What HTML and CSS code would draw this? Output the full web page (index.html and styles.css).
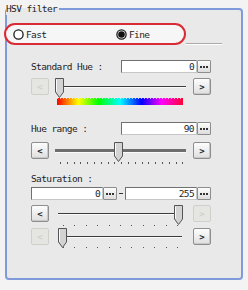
FILE: index.html
```html
<!DOCTYPE html>
<html lang="en">
<head>
    <meta charset="UTF-8">
    <meta name="viewport" content="width=device-width, initial-scale=1.0">
    <title>HSV filter</title>
    <link rel="stylesheet" href="styles.css">
</head>
<body>
    <fieldset class="panel">
        <legend class="panel-title">HSV filter</legend>

        <div class="mode-row">
            <div class="mode-box">
                <label class="radio radio-fast">
                    <svg width="11" height="11" viewBox="0 0 11 11"><circle cx="5.5" cy="5.5" r="4.6" fill="#fff" stroke="#1a1a1a" stroke-width="1.3"/></svg>
                    Fast
                </label>
                <label class="radio">
                    <svg width="11" height="11" viewBox="0 0 11 11"><circle cx="5.5" cy="5.5" r="4.6" fill="#fff" stroke="#1a1a1a" stroke-width="1.3"/><circle cx="5.5" cy="5.5" r="3.3" fill="#111"/></svg>
                    Fine
                </label>
            </div>
            <div class="mode-line"></div>
        </div>

        <div class="group">
            <!-- Standard Hue -->
            <div class="field-row first">
                <span class="field-label">Standard Hue :</span>
                <span class="num-box num-wide">0</span>
                <span class="dots-btn"><i></i><i></i><i></i></span>
            </div>
            <div class="slider">
                <span class="step-btn is-off">&lt;</span>
                <div class="slider-body">
                    <div class="track"></div>
                    <svg class="thumb" style="left: 6px" width="9" height="20" viewBox="0 0 9 20"><path d="M0.5 0.5H8.5V14L4.5 19.5L0.5 14Z" fill="#d3d3d3" stroke="#555"/><path d="M1.5 1.5V13.5" stroke="#fafafa"/></svg>
                </div>
                <span class="step-btn">&gt;</span>
            </div>
            <div class="hue-bar"></div>

            <!-- Hue range -->
            <div class="field-row spaced">
                <span class="field-label">Hue range :</span>
                <span class="num-box num-wide">90</span>
                <span class="dots-btn"><i></i><i></i><i></i></span>
            </div>
            <div class="slider slider-lift">
                <span class="step-btn">&lt;</span>
                <div class="slider-body">
                    <div class="track track-thick"></div>
                    <svg class="thumb" style="left: 65px" width="9" height="20" viewBox="0 0 9 20"><path d="M0.5 0.5H8.5V14L4.5 19.5L0.5 14Z" fill="#d3d3d3" stroke="#555"/><path d="M1.5 1.5V13.5" stroke="#fafafa"/></svg>
                </div>
                <span class="step-btn">&gt;</span>
            </div>
            <div class="ticks ticks-hue"></div>

            <!-- Saturation -->
            <div class="block-label">Saturation :</div>
            <div class="field-row pair">
                <span class="num-box num-half">0</span>
                <span class="dots-btn"><i></i><i></i><i></i></span>
                <span class="dash"></span>
                <span class="num-box num-half">255</span>
                <span class="dots-btn"><i></i><i></i><i></i></span>
            </div>
            <div class="slider">
                <span class="step-btn">&lt;</span>
                <div class="slider-body">
                    <div class="track track-sat"></div>
                    <svg class="thumb" style="left: 125px" width="9" height="20" viewBox="0 0 9 20"><path d="M0.5 0.5H8.5V14L4.5 19.5L0.5 14Z" fill="#d3d3d3" stroke="#555"/><path d="M1.5 1.5V13.5" stroke="#fafafa"/></svg>
                </div>
                <span class="step-btn is-off">&gt;</span>
            </div>
            <div class="ticks ticks-sat"></div>
            <div class="slider slider-tight">
                <span class="step-btn is-off">&lt;</span>
                <div class="slider-body">
                    <div class="track track-sat"></div>
                    <svg class="thumb" style="left: 9px" width="9" height="20" viewBox="0 0 9 20"><path d="M0.5 0.5H8.5V14L4.5 19.5L0.5 14Z" fill="#d3d3d3" stroke="#555"/><path d="M1.5 1.5V13.5" stroke="#fafafa"/></svg>
                </div>
                <span class="step-btn">&gt;</span>
            </div>
            <div class="ticks ticks-sat ticks-last"></div>
        </div>
    </fieldset>
</body>
</html>
```

FILE: styles.css
```css
body {
    margin: 0;
    padding: 3px 0 0 5px;
    background-color: #f3f3f3;
    font-family: "DejaVu Sans Mono", monospace;
    font-size: 9.5px;
    letter-spacing: -0.6px;
    color: #1e1e1e;
}

.panel {
    width: 238px;
    box-sizing: border-box;
    margin: 0;
    padding: 0 0 30px 0;
    border: 2px solid #7f9bdc;
    border-radius: 4px;
    background-color: #e9e9e9;
    min-inline-size: auto;
}

.panel-title {
    padding: 0 2px 0 0;
    margin-left: -1px;
    line-height: 12px;
}

/* Fast / Fine */
.mode-row {
    display: flex;
    margin-top: 8px;
    margin-left: -3px;
}

.mode-box {
    width: 182px;
    height: 22px;
    box-sizing: border-box;
    display: flex;
    align-items: center;
    padding-left: 7px;
    border: 2px solid #d92a35;
    border-radius: 11px;
    background-color: #f6f6f6;
}

.radio {
    display: flex;
    align-items: center;
    gap: 2px;
}

.radio svg {
    display: block;
}

.radio-fast {
    width: 103px;
}

.mode-line {
    width: 36px;
    align-self: flex-end;
    margin-bottom: 1px;
    border-bottom: 1px solid #a9a9a9;
    box-shadow: 0 1px 0 #fff;
}

/* Group contents */
.group {
    width: 180px;
    padding-left: 24px;
}

.field-row {
    display: flex;
    align-items: center;
    height: 13px;
}

.field-row.first {
    margin-top: 15px;
}

.field-row.spaced {
    margin-top: 17px;
}

.field-row.pair {
    margin-top: 2px;
}

.field-label {
    flex: 1;
}

.block-label {
    height: 12px;
    line-height: 12px;
    margin-top: 9px;
}

.num-box {
    height: 13px;
    box-sizing: border-box;
    padding-right: 2px;
    background-color: #fff;
    border: 1px solid;
    border-color: #707070 #c6c6c6 #c6c6c6 #707070;
    text-align: right;
    line-height: 11px;
}

.num-wide {
    width: 76px;
}

.num-half {
    width: 72px;
}

.dots-btn {
    width: 14px;
    height: 13px;
    box-sizing: border-box;
    display: flex;
    align-items: center;
    justify-content: center;
    gap: 1px;
    border: 1px solid #8d8d8d;
    border-radius: 1px;
    background: linear-gradient(#fdfdfd, #dcdcdc);
}

.dots-btn i {
    width: 2px;
    height: 2px;
    background-color: #333;
}

.dash {
    width: 8px;
    height: 1px;
    background: linear-gradient(to right, transparent 2px, #333 2px, #333 6px, transparent 6px);
}

/* Sliders */
.slider {
    display: flex;
    height: 17px;
    margin-top: 5px;
}

.slider-lift {
    margin-top: 7px;
}

.slider-tight {
    margin-top: 2px;
}

.step-btn {
    width: 18px;
    height: 17px;
    box-sizing: border-box;
    display: flex;
    align-items: center;
    justify-content: center;
    border: 1px solid #8e8e8e;
    border-radius: 2px;
    background: linear-gradient(#fdfdfd, #dfdfdf);
    box-shadow: inset -1px -1px 0 #c8c8c8;
    font-weight: bold;
    font-size: 9px;
    letter-spacing: 0;
    color: #222;
}

.step-btn.is-off {
    border-color: #d0d0cb;
    background: #e5e5e1;
    box-shadow: none;
    color: #cfcfcf;
}

.slider-body {
    flex: 1;
    position: relative;
}

.track {
    height: 1px;
    margin: 8px 7px 0 6px;
    background-color: #3c3c3c;
    border-bottom: 1px solid #fbfbfb;
}

.track-thick {
    height: 3px;
    margin-top: 7px;
    background-color: #6e6e6e;
}

.track-sat {
    margin-left: 9px;
    margin-right: 11px;
}

.thumb {
    position: absolute;
    top: 0;
    display: block;
}

.hue-bar {
    width: 126px;
    height: 7px;
    margin: 3px 0 0 26px;
    background:
        repeating-linear-gradient(to right, rgba(255, 255, 255, 0.7) 0 1px, transparent 1px 3px) top / 100% 1px no-repeat,
        linear-gradient(to right, #ff0000, #ffff00 17%, #00ff00 33%, #00ffff 50%, #0000ff 67%, #ff00ff 83%, #ff0033);
}

.ticks {
    height: 2px;
    margin-top: 3px;
}

.ticks-hue {
    width: 123px;
    margin-left: 29px;
    background: repeating-linear-gradient(to right, #555 0 1px, transparent 1px 6.8px);
}

.ticks-sat {
    width: 116px;
    height: 1px;
    margin-left: 32px;
    background: repeating-linear-gradient(to right, #555 0 1px, transparent 1px 11.4px);
}

.ticks-last {
    margin-top: 2px;
}
```
